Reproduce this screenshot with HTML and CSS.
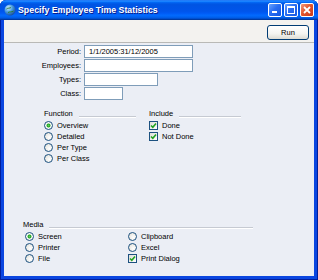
FILE: index.html
```html
<!DOCTYPE html>
<html lang="en">
<head>
    <meta charset="UTF-8">
    <title>Specify Employee Time Statistics</title>
    <link rel="stylesheet" href="styles.css">
</head>
<body>
    <div class="window">
        <div class="titlebar">
            <svg class="app-icon" width="12" height="12" viewBox="0 0 12 12">
                <defs>
                    <radialGradient id="globe" cx="0.35" cy="0.3" r="0.8">
                        <stop offset="0" stop-color="#d8f0ff"/>
                        <stop offset="0.45" stop-color="#4a9ee0"/>
                        <stop offset="1" stop-color="#123f8a"/>
                    </radialGradient>
                </defs>
                <circle cx="6" cy="6" r="5.5" fill="url(#globe)"/>
                <path d="M2.5 5 C4 3.5 6 4.5 7 3.5 M4 8.5 C5.5 7.5 7.5 8.5 9.5 7" stroke="#2b7a3a" stroke-width="1" fill="none"/>
            </svg>
            <span class="title">Specify Employee Time Statistics</span>
            <div class="controls">
                <span class="ctl min"></span>
                <span class="ctl max"></span>
                <span class="ctl close">
                    <svg width="8" height="8" viewBox="0 0 8 8"><path d="M1 1 L7 7 M7 1 L1 7" stroke="#fff" stroke-width="1.8"/></svg>
                </span>
            </div>
        </div>

        <div class="toolbar">
            <button class="run">Run</button>
        </div>

        <div class="content">
            <div class="fields">
                <label>Period:</label>
                <div class="field w-long">1/1/2005:31/12/2005</div>
                <label>Employees:</label>
                <div class="field w-long"></div>
                <label>Types:</label>
                <div class="field w-mid"></div>
                <label>Class:</label>
                <div class="field w-short"></div>
            </div>

            <div class="groups">
                <div class="group">
                    <div class="group-head"><span>Function</span><i class="rule"></i></div>
                    <div class="opt"><span class="radio on"></span>Overview</div>
                    <div class="opt"><span class="radio"></span>Detailed</div>
                    <div class="opt"><span class="radio"></span>Per Type</div>
                    <div class="opt"><span class="radio"></span>Per Class</div>
                </div>
                <div class="group">
                    <div class="group-head"><span>Include</span><i class="rule"></i></div>
                    <div class="opt"><span class="check"><svg width="7" height="7" viewBox="0 0 7 7"><path d="M1 3.5 L2.8 5.3 L6 1.5" stroke="#21a121" stroke-width="1.6" fill="none"/></svg></span>Done</div>
                    <div class="opt"><span class="check"><svg width="7" height="7" viewBox="0 0 7 7"><path d="M1 3.5 L2.8 5.3 L6 1.5" stroke="#21a121" stroke-width="1.6" fill="none"/></svg></span>Not Done</div>
                </div>
            </div>

            <div class="media">
                <div class="group-head"><span>Media</span><i class="rule"></i></div>
                <div class="media-grid">
                    <div class="opt"><span class="radio on"></span>Screen</div>
                    <div class="opt"><span class="radio"></span>Clipboard</div>
                    <div class="opt"><span class="radio"></span>Printer</div>
                    <div class="opt"><span class="radio"></span>Excel</div>
                    <div class="opt"><span class="radio"></span>File</div>
                    <div class="opt"><span class="check"><svg width="7" height="7" viewBox="0 0 7 7"><path d="M1 3.5 L2.8 5.3 L6 1.5" stroke="#21a121" stroke-width="1.6" fill="none"/></svg></span>Print Dialog</div>
                </div>
            </div>
        </div>
    </div>
</body>
</html>
```

FILE: styles.css
```css
html, body {
    margin: 0;
    padding: 0;
}
body {
    font-family: 'Liberation Sans', Arial, sans-serif;
    font-size: 7.5px;
    color: #000;
    background: #fff;
}
.window {
    width: 318px;
    height: 280px;
    box-sizing: border-box;
    display: flex;
    flex-direction: column;
    padding: 0 4px 4px;
    background: #0a46e0;
    border-radius: 6px 6px 0 0;
    box-shadow: inset 0 0 0 1px #001e9c;
}
.titlebar {
    height: 20px;
    margin: 0 -4px;
    padding: 0 4px;
    display: flex;
    align-items: center;
    border-radius: 6px 6px 0 0;
    background: linear-gradient(to bottom, #0058ee 0%, #3593ff 4%, #288eff 6%, #127dff 8%, #036ffc 10%, #0262ee 14%, #0057e5 20%, #0054e3 24%, #0055eb 56%, #005bf5 66%, #026afe 76%, #0062ef 86%, #0052d6 92%, #0040ab 96%, #003092 100%);
}
.app-icon {
    flex: none;
    margin-top: -1px;
}
.title {
    margin-left: 2px;
    color: #fff;
    font-weight: bold;
    font-size: 8.8px;
    text-shadow: 1px 1px 0 #0a1c8a;
    white-space: nowrap;
}
.controls {
    margin-left: auto;
    display: flex;
    gap: 2px;
}
.ctl {
    width: 14px;
    height: 14px;
    box-sizing: border-box;
    border: 1px solid #fff;
    border-radius: 2px;
    background: linear-gradient(135deg, #6aa4ff 0%, #2a6ef2 45%, #1556e0 100%);
    position: relative;
    display: flex;
    align-items: center;
    justify-content: center;
}
.ctl.min::after {
    content: "";
    position: absolute;
    left: 3px;
    bottom: 3px;
    width: 5px;
    height: 2px;
    background: #fff;
}
.ctl.max::after {
    content: "";
    width: 6px;
    height: 5px;
    border: 1px solid #fff;
    border-top-width: 2px;
}
.ctl.close {
    background: linear-gradient(135deg, #f39a7c 0%, #e2562e 45%, #c8391a 100%);
}

.toolbar {
    height: 23px;
    display: flex;
    justify-content: flex-end;
    align-items: flex-start;
    padding: 5px 5px 0 0;
    box-sizing: border-box;
    background: #f3f2ef;
    border-bottom: 1px solid #b9b9b6;
}
.run {
    width: 42px;
    height: 15px;
    padding: 0;
    font-family: inherit;
    font-size: 7.5px;
    color: #000;
    border: 1px solid #003c74;
    border-radius: 3px;
    background: linear-gradient(to bottom, #ffffff 0%, #f4f4f0 60%, #dcdbd3 100%);
}

.content {
    flex: 1;
    display: flex;
    flex-direction: column;
    background: #ebeef5;
    padding: 2px 0 12px;
}
.fields {
    display: grid;
    grid-template-columns: 77px auto;
    column-gap: 3px;
    row-gap: 1px;
    align-items: center;
    justify-items: start;
}
.fields label {
    justify-self: end;
}
.field {
    height: 13px;
    box-sizing: border-box;
    border: 1px solid #7f9db9;
    background: #fff;
    padding-left: 4px;
    line-height: 11px;
}
.w-long { width: 109px; }
.w-mid { width: 74px; }
.w-short { width: 39px; }

.groups {
    display: flex;
    gap: 13px;
    margin-top: 9px;
    padding-left: 40px;
}
.group {
    width: 92px;
}
.group-head {
    height: 10px;
    line-height: 10px;
    display: flex;
    margin-bottom: 1px;
}
.rule {
    flex: 1;
    height: 1px;
    margin: 7px 0 0 6px;
    background: #c6cad2;
    border-bottom: 1px solid #fff;
}
.opt {
    height: 11px;
    display: flex;
    align-items: center;
    white-space: nowrap;
}
.radio, .check {
    flex: none;
    width: 9px;
    height: 9px;
    box-sizing: border-box;
    margin-right: 4px;
    border: 1px solid #1c5180;
}
.radio {
    border-radius: 50%;
    background: radial-gradient(circle at 65% 65%, #ffffff 0%, #ecebe6 60%, #d6d5cc 100%);
}
.radio.on {
    background: radial-gradient(circle, #5ad45a 0, #21a121 1.6px, #ffffff 2.4px, #ecebe6 100%);
}
.check {
    display: flex;
    align-items: center;
    justify-content: center;
    background: linear-gradient(135deg, #dcdcd7 0%, #ffffff 100%);
}

.media {
    margin-top: auto;
    width: 230px;
    margin-left: 19px;
}
.media-grid {
    display: grid;
    grid-template-columns: 103px auto;
    padding-left: 2px;
}
```
